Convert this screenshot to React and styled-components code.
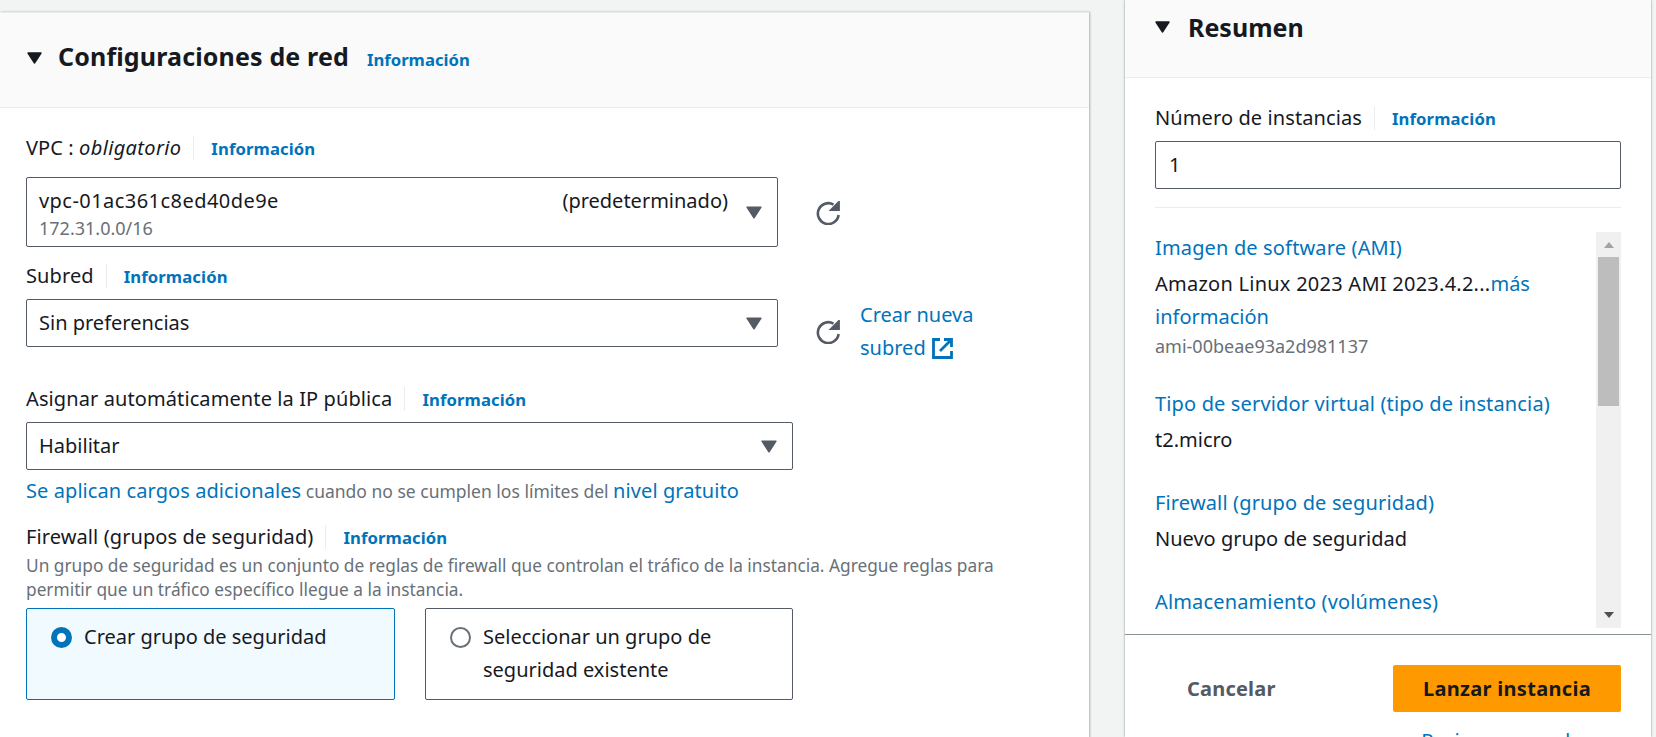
import React from "react"
import styled, { createGlobalStyle } from "styled-components"

// ---- Styles ----

const GlobalStyle = createGlobalStyle`
html, body {
    margin: 0;
    padding: 0;
    background: #f2f3f3;
}
* {
    box-sizing: border-box;
}
`

const Page = styled.div`
display: flex;
width: 1656px;
height: 737px;
overflow: hidden;
font-family: "Noto Sans", "Open Sans", sans-serif;
font-size: 20px;
color: #16191f;
background: #f2f3f3;
`

const Card = styled.section`
width: 1089px;
height: 760px;
margin-top: 12px;
flex: none;
background: #fff;
border-top: 1px solid #e9ebed;
box-shadow: 1px 0 2px rgba(0, 28, 36, 0.3);
`

const CardHeader = styled.header`
display: flex;
align-items: center;
height: 95px;
padding: 0 0 4px 27px;
background: #fafafa;
border-bottom: 1px solid #eaeded;

a {
    margin-top: 3px;
}
`

const Title = styled.h2`
margin: 0 18px 4px 16px;
font-size: 25px;
font-weight: 700;
letter-spacing: 0.15px;
line-height: 32px;
color: #16191f;
`

const Caret = styled.svg`
flex: none;
width: ${p => p.$w || 15}px;
height: ${p => p.$h || 12}px;
margin-top: ${p => p.$mt || 0}px;
fill: ${p => p.$color || "#16191f"};
`

const InfoLink = styled.a`
margin-top: 1px;
font-size: 16.7px;
font-weight: 700;
color: #0073bb;
line-height: 20px;
`

const CardBody = styled.div`
padding: 27px 0 0 26px;
`

const LabelRow = styled.div`
display: flex;
align-items: center;
height: 26px;
line-height: 26px;
letter-spacing: 0.1px;

em {
    letter-spacing: 0.35px;
}
`

const LabelDivider = styled.span`
width: 1px;
height: 24px;
margin: 0 17px 0 12px;
background: #eaeded;
`

const FieldRow = styled.div`
display: flex;
align-items: flex-start;
`

const Select = styled.div`
display: flex;
justify-content: space-between;
align-items: center;
width: ${p => p.$w}px;
height: ${p => p.$h}px;
margin-top: ${p => p.$mt || 0}px;
padding: 0 15px 0 12px;
background: #fff;
border: 1px solid #545b64;
border-radius: 2px;
flex: none;
`

const SelectValue = styled.span`
margin-top: -2px;
`

const SelectText = styled.div`
flex: 1;
min-width: 0;
align-self: flex-start;
padding-top: 10px;
`

const SelectMain = styled.div`
display: flex;
justify-content: space-between;
line-height: 26px;
padding-right: 18px;
`

const VpcId = styled.span`
letter-spacing: 0.45px;
`

const SelectSub = styled.div`
font-size: 18px;
line-height: 28px;
color: #687078;
`

const RefreshButton = styled.svg`
flex: none;
width: 24px;
height: 24px;
margin: ${p => p.$mt}px 0 0 38px;
fill: none;
stroke: #545b64;
stroke-width: 2.6;
`

const CreateLink = styled.a`
display: block;
width: 130px;
margin: 9px 0 0 20px;
line-height: 33px;
color: #0073bb;
`

const ExternalIcon = styled.svg`
display: inline-block;
vertical-align: -4px;
width: 21px;
height: 21px;
margin-left: 6px;
fill: none;
stroke: #0073bb;
stroke-width: 2.8;
`

const FieldGroup = styled.div`
margin-top: ${p => p.$mt || 0}px;
`

const Helper = styled.p`
margin: 8px 0 0;
font-size: 17.5px;
line-height: 26px;
color: #687078;
`

const TextLink = styled.a`
font-size: 20px;
letter-spacing: 0.08px;
color: #0073bb;
`

const Description = styled.p`
width: 1000px;
margin: 4px 0 0;
font-size: 17.3px;
line-height: 24px;
color: #687078;
`

const Tiles = styled.div`
display: flex;
gap: 30px;
margin-top: 6px;
`

const Tile = styled.div`
display: flex;
gap: 12px;
width: ${p => p.$w}px;
height: 92px;
padding: 11px 12px 0 24px;
line-height: 33px;
background: ${p => p.$active ? "#f1faff" : "#fff"};
border: 1px solid ${p => p.$active ? "#0073bb" : "#545b64"};
border-radius: 2px;
`

const Radio = styled.span`
flex: none;
width: 21px;
height: 21px;
margin-top: 7px;
border-radius: 50%;
background: #fff;
border: ${p => p.$on ? "6px solid #0073bb" : "2px solid #687078"};
`

const Summary = styled.aside`
display: flex;
flex-direction: column;
width: 526px;
height: 737px;
margin-left: 36px;
flex: none;
background: #fff;
box-shadow: 0 0 2px rgba(0, 28, 36, 0.5);
`

const SummaryHeader = styled.header`
display: flex;
align-items: center;
gap: 18px;
height: 78px;
padding: 0 0 24px 30px;
background: #fafafa;
border-bottom: 1px solid #eaeded;
flex: none;
`

const SummaryTitle = styled.h2`
margin: 0;
font-size: 25px;
font-weight: 700;
line-height: 32px;
`

const SummaryBody = styled.div`
padding: 27px 30px 0;
`

const NumberInput = styled.div`
height: 48px;
margin-top: 10px;
padding-left: 13px;
line-height: 46px;
background: #fff;
border: 1px solid #545b64;
border-radius: 2px;
`

const Divider = styled.hr`
margin: 18px 0 24px;
border: 0;
border-top: 1px solid #eaeded;
`

const ScrollArea = styled.div`
display: flex;
justify-content: space-between;
height: 396px;
overflow: hidden;
`

const SummaryList = styled.div`
width: 440px;
margin-top: -1px;
`

const SummaryItem = styled.div`
margin-bottom: ${p => p.$mb || 30}px;
line-height: 33px;
`

const ItemLink = styled.a`
display: block;
letter-spacing: 0.15px;
color: #0073bb;
line-height: 33px;
`

const ItemValue = styled.div`
margin-top: 3px;
`

const AmiName = styled.span`
letter-spacing: 0.25px;
`

const InlineLink = styled.a`
color: #0073bb;
`

const ItemSub = styled.div`
margin-top: 1px;
font-size: 18px;
line-height: 24px;
color: #687078;
`

const ScrollTrack = styled.div`
display: flex;
flex-direction: column;
align-items: center;
justify-content: space-between;
width: 25px;
background: #f0f0f0;
position: relative;
`

const ScrollThumb = styled.div`
position: absolute;
top: 25px;
left: 2px;
right: 2px;
height: 149px;
background: #bdbdbd;
`

const ScrollArrow = styled.span`
width: 0;
height: 0;
margin: 10px 0;
border-left: 5px solid transparent;
border-right: 5px solid transparent;
${p => p.$up ? "border-bottom: 6px solid #a3a3a3;" : "border-top: 6px solid #505050;"}
`

const Footer = styled.div`
display: flex;
flex-direction: column;
align-items: flex-end;
margin-top: 6px;
padding: 30px 30px 0;
border-top: 1px solid #879596;
flex: 1;
`

const FooterButtons = styled.div`
display: flex;
align-items: center;
width: 100%;
justify-content: space-between;
padding-left: 32px;
`

const CancelButton = styled.button`
padding: 0;
font: inherit;
font-weight: 700;
letter-spacing: 0.2px;
color: #545b64;
background: none;
border: 0;
`

const PrimaryButton = styled.button`
width: 228px;
height: 47px;
padding: 0;
font: inherit;
font-weight: 700;
letter-spacing: 0.3px;
color: #16191f;
background: #ff9900;
border: 0;
border-radius: 2px;
`

const ReviewLink = styled.a`
margin: 16px 29px 0 0;
line-height: 26px;
color: #0073bb;
white-space: nowrap;
`

const Down = ({ w, h, color, mt }) => (
    <Caret $w={w} $h={h} $mt={mt} $color={color} viewBox="0 0 15 12">
        <path d="M1 1h13L7.5 11z" stroke={color || "#16191f"} strokeWidth="1.4" strokeLinejoin="round" />
    </Caret>
)

const Refresh = ({ mt }) => (
    <RefreshButton $mt={mt} viewBox="0 0 24 24">
        <path d="M17.5 3.6A10.4 10.4 0 1 0 22.6 14" />
        <path d="M22.8 1.2v7.6h-7.6z" fill="#545b64" strokeWidth="2.2" />
    </RefreshButton>
)

const Info = () => <InfoLink>Información</InfoLink>

const App = () => (
    <Page>
        <GlobalStyle />
        <Card>
            <CardHeader>
                <Down />
                <Title>Configuraciones de red</Title>
                <Info />
            </CardHeader>
            <CardBody>
                <LabelRow>
                    <span>VPC : <em>obligatorio</em></span>
                    <LabelDivider />
                    <Info />
                </LabelRow>
                <FieldRow>
                    <Select $w={752} $h={70} $mt={16}>
                        <SelectText>
                            <SelectMain>
                                <VpcId>vpc-01ac361c8ed40de9e</VpcId>
                                <span>(predeterminado)</span>
                            </SelectMain>
                            <SelectSub>172.31.0.0/16</SelectSub>
                        </SelectText>
                        <Down w={16} h={13} color="#545b64" />
                    </Select>
                    <Refresh mt={40} />
                </FieldRow>
                <FieldGroup $mt={16}>
                    <LabelRow>
                        <span>Subred</span>
                        <LabelDivider />
                        <Info />
                    </LabelRow>
                </FieldGroup>
                <FieldRow>
                    <Select $w={752} $h={48} $mt={10}>
                        <SelectValue>Sin preferencias</SelectValue>
                        <Down w={16} h={13} color="#545b64" />
                    </Select>
                    <Refresh mt={31} />
                    <CreateLink>
                        Crear nueva subred
                        <ExternalIcon viewBox="0 0 21 21">
                            <path d="M8 1.5H1.5v18h18V13M12 1.5h7.5V9M19 2 8 13" />
                        </ExternalIcon>
                    </CreateLink>
                </FieldRow>
                <FieldGroup $mt={22}>
                    <LabelRow>
                        <span>Asignar automáticamente la IP pública</span>
                        <LabelDivider />
                        <Info />
                    </LabelRow>
                </FieldGroup>
                <Select $w={767} $h={48} $mt={10}>
                    <SelectValue>Habilitar</SelectValue>
                    <Down w={16} h={13} color="#545b64" />
                </Select>
                <Helper>
                    <TextLink>Se aplican cargos adicionales</TextLink> cuando no se cumplen los límites del <TextLink>nivel gratuito</TextLink>
                </Helper>
                <FieldGroup $mt={20}>
                    <LabelRow>
                        <span>Firewall (grupos de seguridad)</span>
                        <LabelDivider />
                        <Info />
                    </LabelRow>
                </FieldGroup>
                <Description>
                    Un grupo de seguridad es un conjunto de reglas de firewall que controlan el tráfico de la instancia. Agregue reglas para permitir que un tráfico específico llegue a la instancia.
                </Description>
                <Tiles>
                    <Tile $w={369} $active>
                        <Radio $on />
                        <span>Crear grupo de seguridad</span>
                    </Tile>
                    <Tile $w={368}>
                        <Radio />
                        <span>Seleccionar un grupo de seguridad existente</span>
                    </Tile>
                </Tiles>
            </CardBody>
        </Card>
        <Summary>
            <SummaryHeader>
                <Down mt={1} />
                <SummaryTitle>Resumen</SummaryTitle>
            </SummaryHeader>
            <SummaryBody>
                <LabelRow>
                    <span>Número de instancias</span>
                    <LabelDivider />
                    <Info />
                </LabelRow>
                <NumberInput>1</NumberInput>
                <Divider />
                <ScrollArea>
                    <SummaryList>
                        <SummaryItem $mb={29}>
                            <ItemLink>Imagen de software (AMI)</ItemLink>
                            <ItemValue><AmiName>Amazon Linux 2023 AMI 2023.4.2...</AmiName><InlineLink>más información</InlineLink></ItemValue>
                            <ItemSub>ami-00beae93a2d981137</ItemSub>
                        </SummaryItem>
                        <SummaryItem>
                            <ItemLink>Tipo de servidor virtual (tipo de instancia)</ItemLink>
                            <ItemValue>t2.micro</ItemValue>
                        </SummaryItem>
                        <SummaryItem>
                            <ItemLink>Firewall (grupo de seguridad)</ItemLink>
                            <ItemValue>Nuevo grupo de seguridad</ItemValue>
                        </SummaryItem>
                        <SummaryItem>
                            <ItemLink>Almacenamiento (volúmenes)</ItemLink>
                        </SummaryItem>
                    </SummaryList>
                    <ScrollTrack>
                        <ScrollThumb />
                        <ScrollArrow $up />
                        <ScrollArrow />
                    </ScrollTrack>
                </ScrollArea>
            </SummaryBody>
            <Footer>
                <FooterButtons>
                    <CancelButton>Cancelar</CancelButton>
                    <PrimaryButton>Lanzar instancia</PrimaryButton>
                </FooterButtons>
                <ReviewLink>Revisar comandos</ReviewLink>
            </Footer>
        </Summary>
    </Page>
)

export default App
